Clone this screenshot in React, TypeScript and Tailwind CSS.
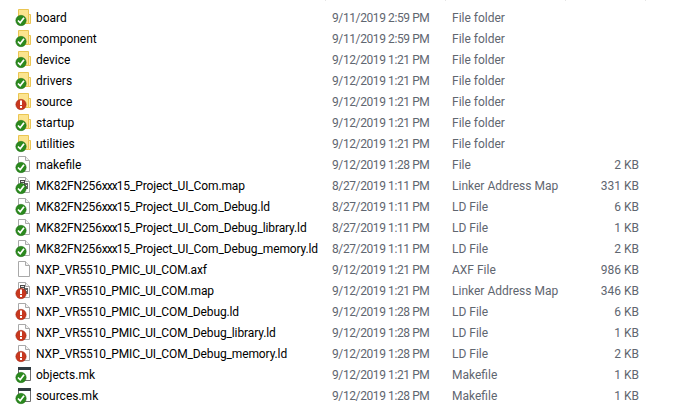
import React from 'react';

type Kind = 'folder' | 'file' | 'map' | 'mk' | 'plain';

interface Row {
  name: string;
  date: string;
  type: string;
  size?: string;
  icon: Kind;
  error?: boolean;
}

const rows: Row[] = [
  { name: 'board', date: '9/11/2019 2:59 PM', type: 'File folder', icon: 'folder' },
  { name: 'component', date: '9/11/2019 2:59 PM', type: 'File folder', icon: 'folder' },
  { name: 'device', date: '9/12/2019 1:21 PM', type: 'File folder', icon: 'folder' },
  { name: 'drivers', date: '9/12/2019 1:21 PM', type: 'File folder', icon: 'folder' },
  { name: 'source', date: '9/12/2019 1:21 PM', type: 'File folder', icon: 'folder', error: true },
  { name: 'startup', date: '9/12/2019 1:21 PM', type: 'File folder', icon: 'folder' },
  { name: 'utilities', date: '9/12/2019 1:21 PM', type: 'File folder', icon: 'folder' },
  { name: 'makefile', date: '9/12/2019 1:28 PM', type: 'File', size: '2 KB', icon: 'file' },
  { name: 'MK82FN256xxx15_Project_UI_Com.map', date: '8/27/2019 1:11 PM', type: 'Linker Address Map', size: '331 KB', icon: 'map' },
  { name: 'MK82FN256xxx15_Project_UI_Com_Debug.ld', date: '8/27/2019 1:11 PM', type: 'LD File', size: '6 KB', icon: 'file' },
  { name: 'MK82FN256xxx15_Project_UI_Com_Debug_library.ld', date: '8/27/2019 1:11 PM', type: 'LD File', size: '1 KB', icon: 'file' },
  { name: 'MK82FN256xxx15_Project_UI_Com_Debug_memory.ld', date: '8/27/2019 1:11 PM', type: 'LD File', size: '2 KB', icon: 'file' },
  { name: 'NXP_VR5510_PMIC_UI_COM.axf', date: '9/12/2019 1:21 PM', type: 'AXF File', size: '986 KB', icon: 'plain' },
  { name: 'NXP_VR5510_PMIC_UI_COM.map', date: '9/12/2019 1:21 PM', type: 'Linker Address Map', size: '346 KB', icon: 'map', error: true },
  { name: 'NXP_VR5510_PMIC_UI_COM_Debug.ld', date: '9/12/2019 1:28 PM', type: 'LD File', size: '6 KB', icon: 'file', error: true },
  { name: 'NXP_VR5510_PMIC_UI_COM_Debug_library.ld', date: '9/12/2019 1:28 PM', type: 'LD File', size: '1 KB', icon: 'file', error: true },
  { name: 'NXP_VR5510_PMIC_UI_COM_Debug_memory.ld', date: '9/12/2019 1:28 PM', type: 'LD File', size: '2 KB', icon: 'file', error: true },
  { name: 'objects.mk', date: '9/12/2019 1:21 PM', type: 'Makefile', size: '1 KB', icon: 'mk' },
  { name: 'sources.mk', date: '9/12/2019 1:28 PM', type: 'Makefile', size: '1 KB', icon: 'mk' },
];

const BaseIcon = ({ kind }: { kind: Kind }) => {
  if (kind === 'folder') {
    return (
      <>
        <path d="M3.5 .5H13.5V14.5H3.5Z" fill="#fce48f" stroke="#eac552" />
        <path d="M13.5 5.5H15.5V14.5H13.5Z" fill="#fdeeb0" stroke="#eac552" />
      </>
    );
  }
  if (kind === 'mk') {
    return (
      <>
        <path d="M3.5 1.5H15.5V14.5H3.5Z" fill="#ffffff" stroke="#6d6d6d" />
        <path d="M3 1H16V4H3Z" fill="#2f3a40" />
      </>
    );
  }
  return (
    <>
      <path d="M3.5 .5H10.5L14.5 4.5V15.5H3.5Z" fill="#ffffff" stroke="#a9a9a9" />
      <path d="M10.5 .5V4.5H14.5" fill="#f1f1f1" stroke="#a9a9a9" />
      {kind === 'map' && (
        <>
          <path d="M5 3H10V8H5Z" fill="#4a4a4a" />
          <path d="M10 6H13V12H8V8H10Z" fill="#666666" />
          <path d="M6 4H9V5H6ZM6 6H9V7H6ZM11 8H12V9H11Z" fill="#e8e8e8" />
        </>
      )}
    </>
  );
};

// shell overlay badge, green tick or red exclamation
const FileIcon = ({ kind, error }: { kind: Kind; error?: boolean }) => (
  <svg width="18" height="18" viewBox="0 0 18 18" className="block shrink-0">
    <BaseIcon kind={kind} />
    {kind !== 'plain' &&
      (error ? (
        <>
          <circle cx="6" cy="11.5" r="5.2" fill="#c8381f" stroke="#9c2c1a" strokeWidth="0.5" />
          <path d="M5 7.5H7V12H5ZM5 13H7V15H5Z" fill="#ffffff" />
        </>
      ) : (
        <>
          <circle cx="6" cy="11.5" r="5.2" fill="#2b8a1e" stroke="#1e6a16" strokeWidth="0.5" />
          <path d="M3 11.5L5.2 13.8L9 8.8" fill="none" stroke="#ffffff" strokeWidth="1.7" />
        </>
      ))}
  </svg>
);

// the xxx in the part names is much narrower in the original font
const Name = ({ value }: { value: string }) => {
  const parts = value.split('xxx');
  if (parts.length === 1) return <>{value}</>;
  return (
    <>
      {parts[0]}
      <span className="tracking-[-1px]">xxx</span>
      {parts[1]}
    </>
  );
};

export default function App() {
  return (
    <div className="relative h-[413px] w-[686px] overflow-hidden bg-white pt-[7px] text-[12px] leading-[23px] font-['Roboto','Noto_Sans',sans-serif]">
      <div className="absolute left-[325px] top-0 h-px w-px bg-[#e5e5e5]" />
      <div className="absolute left-[445px] top-0 h-px w-px bg-[#e5e5e5]" />
      <div className="absolute left-[565px] top-0 h-px w-px bg-[#e5e5e5]" />
      <div className="absolute left-[645px] top-0 h-px w-px bg-[#e5e5e5]" />
      {rows.map((row) => (
        <div key={row.name} className="flex h-[21px] items-start">
          <div className="ml-[15px] mt-[2px] w-[18px]">
            <FileIcon kind={row.icon} error={row.error} />
          </div>
          <div className={`ml-[3px] w-[296px] truncate text-[#000000] ${row.size && row.name.match(/^[A-Z]/) ? 'tracking-[-0.12px]' : ''}`}>
            <Name value={row.name} />
          </div>
          <div className="w-[120px] tracking-[-0.4px] text-[#5f6670]">{row.date}</div>
          <div className="w-[120px] text-[#5f6670]">{row.type}</div>
          <div className="w-[67px] text-right text-[#5f6670]">{row.size}</div>
        </div>
      ))}
    </div>
  );
}
